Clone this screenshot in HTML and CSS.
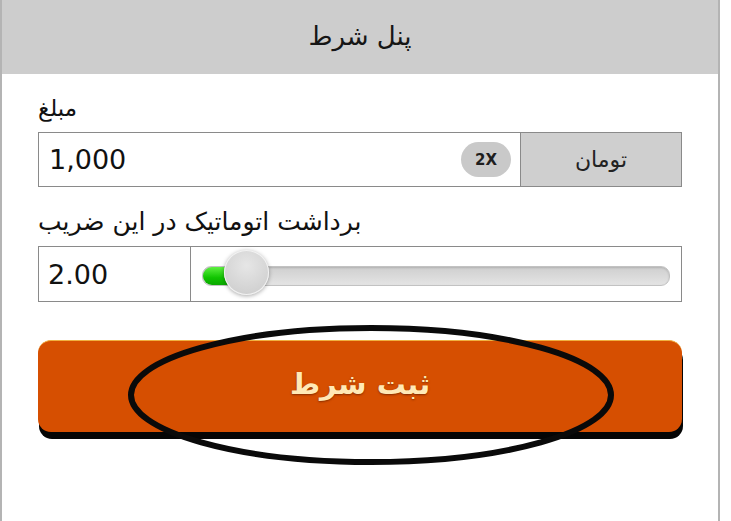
FILE: index.html
```html
<!DOCTYPE html>
<html lang="fa">
<head>
<meta charset="utf-8">
<title>پنل شرط</title>
<link rel="stylesheet" href="styles.css">
</head>
<body>
<div class="panel">
  <div class="panel-header">پنل شرط</div>
  <div class="panel-body">
    <div class="label">مبلغ</div>
    <div class="amount-row">
      <div class="amount-value">1,000</div>
      <div class="pill">2X</div>
      <div class="currency">تومان</div>
    </div>
    <div class="label label-auto">برداشت اتوماتیک در این ضریب</div>
    <div class="slider-row">
      <div class="mult-value">2.00</div>
      <div class="slider">
        <div class="track">
          <div class="fill"></div>
          <div class="thumb"></div>
        </div>
      </div>
    </div>
    <button class="submit">ثبت شرط</button>
  </div>
  <svg class="annotation" width="731" height="521" viewBox="0 0 731 521">
    <ellipse cx="371" cy="395" rx="240" ry="67" fill="none" stroke="#0a0a0a" stroke-width="6"/>
  </svg>
</div>
</body>
</html>
```
FILE: styles.css
```css
html, body {
  margin: 0;
  padding: 0;
  background: #ffffff;
}

body {
  font-family: "DejaVu Sans", sans-serif;
  color: #111;
  width: 731px;
  height: 521px;
  overflow: hidden;
}

.panel {
  position: relative;
  width: 720px;
  min-height: 521px;
  box-sizing: border-box;
  border-left: 2px solid #b4b4b4;
  border-right: 2px solid #b4b4b4;
}

.panel-header {
  height: 74px;
  background: #cdcdcd;
  display: flex;
  align-items: center;
  justify-content: center;
  font-size: 26px;
  color: #151515;
  padding-bottom: 2px;
  box-sizing: border-box;
}

.panel-body {
  padding: 22px 36px 0;
  display: flex;
  flex-direction: column;
}

.label {
  font-size: 23px;
  line-height: 24px;
  height: 24px;
  margin-bottom: 12px;
  text-align: left;
  direction: ltr;
}

.label-auto {
  margin-top: 23px;
  font-size: 25px;
}

.amount-row {
  height: 55px;
  box-sizing: border-box;
  border: 1px solid #8a8a8a;
  display: flex;
  align-items: center;
}

.amount-value {
  flex: 1;
  font-size: 27px;
  padding-left: 10px;
}

.pill {
  width: 50px;
  height: 35px;
  border-radius: 18px;
  background: #c9c9c9;
  color: #1e1e1e;
  font-size: 15px;
  font-weight: 600;
  display: flex;
  align-items: center;
  justify-content: center;
  margin-right: 9px;
}

.currency {
  width: 160px;
  align-self: stretch;
  background: #cfcfcf;
  border-left: 1px solid #8a8a8a;
  display: flex;
  align-items: center;
  justify-content: center;
  font-size: 22px;
  color: #222;
}

.slider-row {
  height: 56px;
  box-sizing: border-box;
  border: 1px solid #8a8a8a;
  display: flex;
}

.mult-value {
  width: 152px;
  box-sizing: border-box;
  border-right: 1px solid #8a8a8a;
  display: flex;
  align-items: center;
  font-size: 27px;
  padding-left: 9px;
}

.slider {
  flex: 1;
  display: flex;
  align-items: center;
  padding: 0 11px;
}

.track {
  position: relative;
  flex: 1;
  height: 18px;
  margin-top: 3px;
  border-radius: 9px;
  background: linear-gradient(#cfcfcf, #e4e4e4);
  border: 1px solid #c2c2c2;
  box-shadow: inset 0 1px 2px rgba(0,0,0,0.15);
}

.fill {
  width: 30px;
  height: 100%;
  border-radius: 9px 0 0 9px;
  background: linear-gradient(#5df040, #10c400 60%, #0aa800);
}

.thumb {
  position: absolute;
  left: 21px;
  top: 50%;
  width: 45px;
  height: 45px;
  margin-top: -26px;
  border-radius: 50%;
  background: radial-gradient(circle at 50% 35%, #e6e6e6, #d2d2d2 70%, #c4c4c4);
  box-shadow: 0 1px 4px rgba(0,0,0,0.35), inset 0 0 0 1px #f2f2f2;
}

.submit {
  margin-top: 38px;
  height: 92px;
  border: none;
  border-top: 1px solid #f0b040;
  border-radius: 13px;
  background: #d64f01;
  box-shadow: 1px 7px 0 #050505;
  color: #ffe9b6;
  font-family: "DejaVu Sans", sans-serif;
  font-size: 29px;
  font-weight: bold;
  text-shadow: 0 1px 2px rgba(80,20,0,0.6);
  padding: 0 0 6px;
  cursor: pointer;
}

.annotation {
  position: absolute;
  left: -2px;
  top: 0;
  pointer-events: none;
}
```
